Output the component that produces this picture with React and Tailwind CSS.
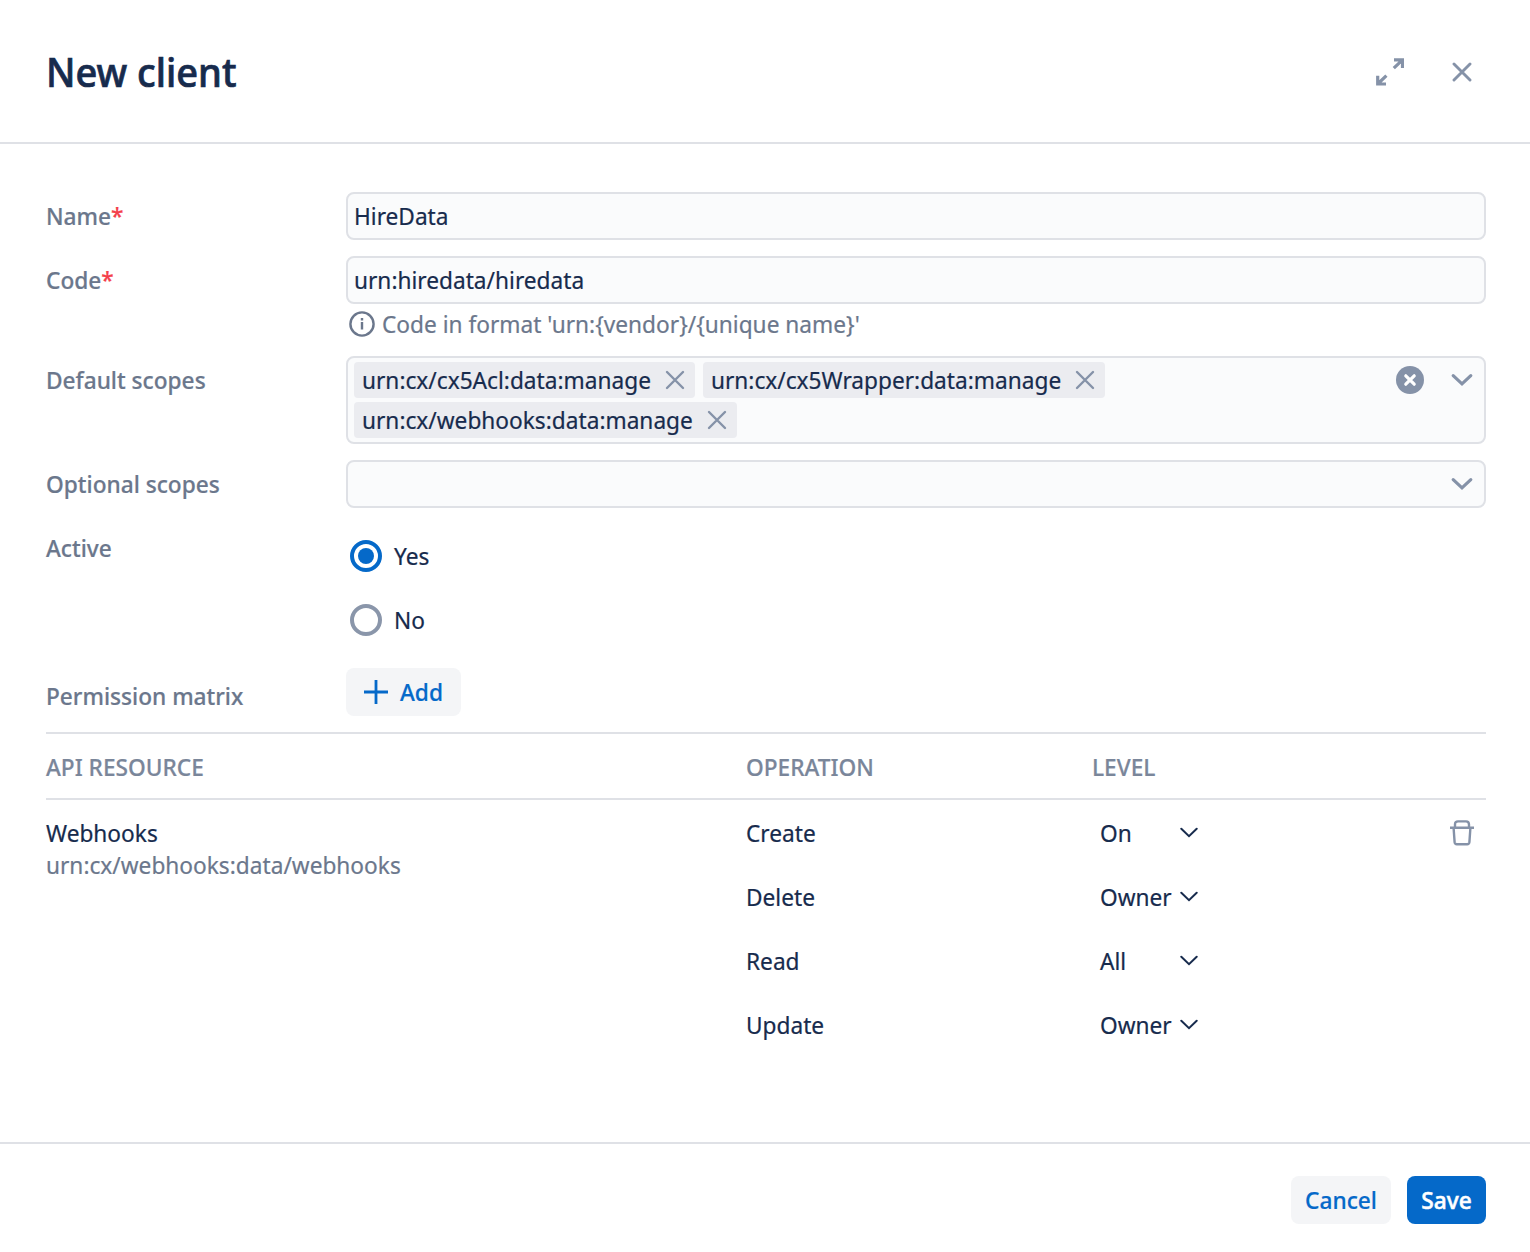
import { useState } from "react";

const defaultScopes = [
    "urn:cx/cx5Acl:data:manage",
    "urn:cx/cx5Wrapper:data:manage",
    "urn:cx/webhooks:data:manage",
];

const permissions = [
    { operation: "Create", level: "On" },
    { operation: "Delete", level: "Owner" },
    { operation: "Read", level: "All" },
    { operation: "Update", level: "Owner" },
];

// Semi-condensed text: smaller font stretched vertically, so the layout width stays true
function Text({ children, className = "" }) {
    return <span className={`inline-block translate-y-[0.5px] scale-y-[1.065] whitespace-nowrap ${className}`}>{children}</span>;
}

function Cross({ className, width = 2.9 }) {
    return (
        <svg viewBox="0 0 20 20" fill="none" stroke="currentColor" strokeWidth={width} strokeLinecap="round" className={className}>
            <path d="M2 2l16 16M18 2L2 18" />
        </svg>
    );
}

function Chevron({ className }) {
    return (
        <svg viewBox="0 0 24 24" fill="none" stroke="currentColor" strokeWidth="3.2" strokeLinecap="round" className={className}>
            <path d="M3.2 7.6L12 15.9l8.800-8.300" />
        </svg>
    );
}

function Field({ label, required, children, className = "" }) {
    return (
        <div className="flex items-start">
            <div className={`flex w-[300px] shrink-0 py-2 font-medium text-[#6b778c] ${className}`}>
                <Text>
                    {label}
                    {required && <span className="text-[#f43f4b]">*</span>}
                </Text>
            </div>
            <div className="flex-1">{children}</div>
        </div>
    );
}

function TextInput({ value, onChange, label }) {
    return (
        <div className="flex h-12 items-center rounded-lg border-2 border-[#dfe1e6] bg-[#fafbfc] px-1.5">
            <input
                aria-label={label}
                value={value}
                onChange={(e) => onChange(e.target.value)}
                className="block h-8 w-full translate-y-[0.5px] scale-y-[1.065] pb-px outline-none"
            />
        </div>
    );
}

function Radio({ label, checked, onClick }) {
    return (
        <button onClick={onClick} className="flex h-16 items-center gap-3 pl-1">
            <span
                className={`flex size-8 items-center justify-center rounded-full border-4 ${checked ? "border-[#0569c9]" : "border-[#8a96aa]"}`}
            >
                {checked && <span className="size-4 rounded-full bg-[#0569c9]" />}
            </span>
            <Text>{label}</Text>
        </button>
    );
}

export default function App() {
    const [name, setName] = useState("HireData");
    const [code, setCode] = useState("urn:hiredata/hiredata");
    const [active, setActive] = useState(true);

    return (
        <div className="flex h-[1252px] w-[1530px] flex-col bg-white font-['Noto_Sans',sans-serif] text-[22.68px] leading-8 text-[#172b4d] [-webkit-text-stroke:0.2px]">
            {/* Header */}
            <header className="flex h-36 items-center justify-between border-b-2 border-[#dfe1e6] pt-0.5 pr-[58px] pl-[46px]">
                <h1 className="-translate-y-px scale-y-[1.055] text-[38px] leading-12 font-medium [-webkit-text-stroke:0.7px]">New client</h1>
                <div className="flex items-center gap-[48px] text-[#8592a8]">
                    <svg viewBox="0 0 28 28" fill="none" stroke="currentColor" strokeWidth="3.2" className="size-7">
                        <path d="M18 1.800h8.500v8.200M26 2.300l-8.200 7.900" />
                        <path d="M10 26H1.700v-8.200M2.200 25.500l8.200-7.900" />
                    </svg>
                    <Cross className="size-5" />
                </div>
            </header>

            {/* Form */}
            <main className="flex-1 pt-12 pr-11 pl-[46px]">
                <div className="flex flex-col gap-4">
                    <Field label="Name" required>
                        <TextInput label="Name" value={name} onChange={setName} />
                    </Field>
                    <Field label="Code" required>
                        <TextInput label="Code" value={code} onChange={setCode} />
                        <div className="-mb-1 flex h-10 items-center gap-[7px] pl-[3px] text-[#6b778c]">
                            <svg viewBox="0 0 26 26" fill="none" stroke="currentColor" strokeWidth="2.4" className="size-[26px]">
                                <circle cx="13" cy="13" r="11.600" />
                                <path d="M13 11v7.500M13 7v2.600" />
                            </svg>
                            <Text>{"Code in format 'urn:{vendor}/{unique name}'"}</Text>
                        </div>
                    </Field>
                    <Field label="Default scopes">
                        <div className="flex h-[88px] items-start rounded-lg border-2 border-[#dfe1e6] bg-[#fafbfc] pt-1 pr-2.5 pl-1.5">
                            <div className="flex flex-1 flex-wrap gap-x-2 gap-y-1">
                                {defaultScopes.map((scope) => (
                                    <span key={scope} className="flex h-9 items-center gap-[14px] rounded bg-[#ebecf0] pr-2.5 pl-2">
                                        <Text>{scope}</Text>
                                        <Cross className="size-5 text-[#8592a8]" width={2.4} />
                                    </span>
                                ))}
                            </div>
                            <div className="flex h-9 items-center gap-[26px] text-[#8592a8]">
                                <svg viewBox="0 0 28 28" className="size-7">
                                    <circle cx="14" cy="14" r="14" fill="currentColor" />
                                    <path d="M9.800 9.800l8.400 8.400M18.200 9.800l-8.400 8.400" stroke="#fff" strokeWidth="3.200" strokeLinecap="round" />
                                </svg>
                                <Chevron className="size-6" />
                            </div>
                        </div>
                    </Field>
                    <Field label="Optional scopes">
                        <div className="flex h-12 items-center justify-end rounded-lg border-2 border-[#dfe1e6] bg-[#fafbfc] pr-2.5 text-[#8592a8]">
                            <Chevron className="size-6" />
                        </div>
                    </Field>
                    <Field label="Active">
                        <Radio label="Yes" checked={active} onClick={() => setActive(true)} />
                        <Radio label="No" checked={!active} onClick={() => setActive(false)} />
                    </Field>
                    <Field label="Permission matrix" className="mt-1 -mb-1">
                        <button className="flex h-12 items-center gap-3 rounded-lg bg-[#f4f5f7] pr-[18px] pl-[18px] font-medium text-[#0569c9]">
                            <svg viewBox="0 0 24 24" stroke="currentColor" strokeWidth="2.800" className="size-6">
                                <path d="M12 0v24M0 12h24" />
                            </svg>
                            <Text>Add</Text>
                        </button>
                    </Field>
                </div>

                {/* Permission table */}
                <div className="mt-4">
                    <div className="flex h-[68px] items-center border-y-2 border-[#dfe1e6] pt-0.5 font-medium text-[#7a869a]">
                        <div className="flex w-[700px]"><Text>API RESOURCE</Text></div>
                        <div className="flex w-[346px]"><Text>OPERATION</Text></div>
                        <Text>LEVEL</Text>
                    </div>
                    <div className="flex pt-[17px]">
                        <div className="flex w-[700px] flex-col items-start">
                            <Text>Webhooks</Text>
                            <Text className="text-[#6b778c]">urn:cx/webhooks:data/webhooks</Text>
                        </div>
                        <div className="flex flex-1 flex-col gap-8">
                            {permissions.map(({ operation, level }) => (
                                <div key={operation} className="flex">
                                    <div className="flex w-[354px]"><Text>{operation}</Text></div>
                                    <div className="flex w-[98px] items-center justify-between">
                                        <Text>{level}</Text>
                                        <svg viewBox="0 0 18 12" fill="none" stroke="currentColor" strokeWidth="2" strokeLinecap="round" className="h-3 w-[18px] shrink-0">
                                            <path d="M1.300 1.800L9 9.200l7.700-7.400" />
                                        </svg>
                                    </div>
                                </div>
                            ))}
                        </div>
                        <svg viewBox="0 0 24 26" fill="none" stroke="currentColor" strokeWidth="2.400" className="mt-[3px] mr-3 h-[26px] w-6 text-[#8592a8]">
                            <path d="M0 7.800h24M5 7.800V4.500Q5 1.400 8 1.400h8q3 0 3 3.100v3.300M3.600 8l1 14.200Q4.800 24.200 6.800 24.200h10.400q2 0 2.200-2L20.400 8" />
                        </svg>
                    </div>
                </div>
            </main>

            {/* Footer */}
            <footer className="flex h-[110px] items-start justify-end gap-4 border-t-2 border-[#dfe1e6] pt-8 pr-11 font-medium">
                <button className="h-12 w-[100px] rounded-lg bg-[#f4f5f7] text-[#0569c9]"><Text>Cancel</Text></button>
                <button className="h-12 w-[79px] rounded-lg bg-[#0569c9] text-white [-webkit-text-stroke:0.5px]"><Text>Save</Text></button>
            </footer>
        </div>
    );
}
